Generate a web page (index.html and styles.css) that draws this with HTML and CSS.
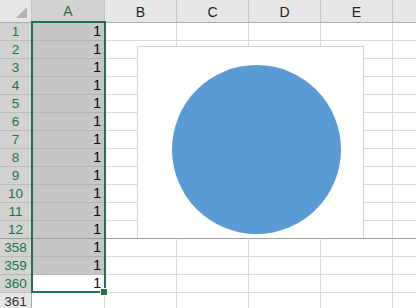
FILE: index.html
```html
<!DOCTYPE html>
<html>
<head>
<meta charset="utf-8">
<link rel="stylesheet" href="styles.css">
</head>
<body>
<div class="sheet">
  <div class="grid">
    <div class="hd corner"><span class="tri"></span></div>
    <div class="hd col sel">A</div>
    <div class="hd col">B</div>
    <div class="hd col">C</div>
    <div class="hd col">D</div>
    <div class="hd col">E</div>
    <div class="hd col last"></div>

    <div class="rh sel">1</div><div class="c a">1</div><div class="c"></div><div class="c"></div><div class="c"></div><div class="c"></div><div class="c last"></div>
    <div class="rh sel">2</div><div class="c a">1</div><div class="c"></div><div class="c"></div><div class="c"></div><div class="c"></div><div class="c last"></div>
    <div class="rh sel">3</div><div class="c a">1</div><div class="c"></div><div class="c"></div><div class="c"></div><div class="c"></div><div class="c last"></div>
    <div class="rh sel">4</div><div class="c a">1</div><div class="c"></div><div class="c"></div><div class="c"></div><div class="c"></div><div class="c last"></div>
    <div class="rh sel">5</div><div class="c a">1</div><div class="c"></div><div class="c"></div><div class="c"></div><div class="c"></div><div class="c last"></div>
    <div class="rh sel">6</div><div class="c a">1</div><div class="c"></div><div class="c"></div><div class="c"></div><div class="c"></div><div class="c last"></div>
    <div class="rh sel">7</div><div class="c a">1</div><div class="c"></div><div class="c"></div><div class="c"></div><div class="c"></div><div class="c last"></div>
    <div class="rh sel">8</div><div class="c a">1</div><div class="c"></div><div class="c"></div><div class="c"></div><div class="c"></div><div class="c last"></div>
    <div class="rh sel">9</div><div class="c a">1</div><div class="c"></div><div class="c"></div><div class="c"></div><div class="c"></div><div class="c last"></div>
    <div class="rh sel">10</div><div class="c a">1</div><div class="c"></div><div class="c"></div><div class="c"></div><div class="c"></div><div class="c last"></div>
    <div class="rh sel">11</div><div class="c a">1</div><div class="c"></div><div class="c"></div><div class="c"></div><div class="c"></div><div class="c last"></div>
    <div class="rh sel frz">12</div><div class="c a frz">1</div><div class="c frz"></div><div class="c frz"></div><div class="c frz"></div><div class="c frz"></div><div class="c last frz"></div>
    <div class="rh sel">358</div><div class="c a">1</div><div class="c"></div><div class="c"></div><div class="c"></div><div class="c"></div><div class="c last"></div>
    <div class="rh sel">359</div><div class="c a">1</div><div class="c"></div><div class="c"></div><div class="c"></div><div class="c"></div><div class="c last"></div>
    <div class="rh sel">360</div><div class="c active">1</div><div class="c"></div><div class="c"></div><div class="c"></div><div class="c"></div><div class="c last"></div>
    <div class="rh">361</div><div class="c"></div><div class="c"></div><div class="c"></div><div class="c"></div><div class="c"></div><div class="c last"></div>
  </div>

  <div class="selection"></div>
  <div class="handle"></div>

  <div class="chart">
    <div class="pie"></div>
  </div>
</div>
</body>
</html>
```

FILE: styles.css
```css
html, body {
  margin: 0;
  padding: 0;
  background: #ffffff;
  overflow: hidden;
}

.sheet {
  position: relative;
  width: 416px;
  height: 308px;
  overflow: hidden;
  font-family: "Liberation Sans", Arial, sans-serif;
  font-size: 13px;
}

.grid {
  display: grid;
  grid-template-columns: 32px 73px 72px 72px 72px 72px 1fr;
  grid-template-rows: 23px repeat(16, 18px);
}

.hd {
  box-sizing: border-box;
  background: #e6e6e6;
  border-bottom: 1px solid #ababab;
  border-right: 1px solid #c6c6c6;
  color: #222;
  font-size: 14px;
  display: flex;
  align-items: flex-end;
  justify-content: center;
  padding-bottom: 2px;
}

.hd.last { border-right: none; }

.hd.sel {
  background: #d2d2d2;
  color: #217346;
  border-bottom: 2px solid #217346;
}

.corner {
  position: relative;
  border-right: 1px solid #c6c6c6;
}

.tri {
  position: absolute;
  right: 4px;
  bottom: 4px;
  width: 0;
  height: 0;
  border-left: 11px solid transparent;
  border-bottom: 11px solid #b4b4b4;
}

.rh {
  box-sizing: border-box;
  background: #e6e6e6;
  border-bottom: 1px solid #c8c8c8;
  border-right: 1px solid #ababab;
  color: #333;
  font-size: 13.5px;
  display: flex;
  align-items: flex-end;
  justify-content: center;
  padding-bottom: 1px;
  line-height: 15px;
}

.rh.sel {
  background: #d2d2d2;
  color: #217346;
  border-bottom-color: #bcbcbc;
}

.c {
  box-sizing: border-box;
  border-right: 1px solid #d9d9d9;
  border-bottom: 1px solid #d9d9d9;
  color: #000;
  font-size: 14px;
  display: flex;
  align-items: flex-end;
  justify-content: flex-end;
  padding-right: 3px;
  padding-bottom: 1px;
  line-height: 15px;
}

.c.last { border-right: none; }

.c.a {
  background: #c6c6c6;
  border-bottom-color: #b5b5b5;
}

.c.active {
  background: #ffffff;
}

.frz,
.rh.frz,
.c.a.frz {
  border-bottom: 1px solid #9f9f9f;
}

.selection {
  position: absolute;
  left: 31px;
  top: 21px;
  width: 75px;
  height: 272px;
  box-sizing: border-box;
  border: 2px solid #217346;
  pointer-events: none;
}

.handle {
  position: absolute;
  left: 101px;
  top: 289px;
  width: 6px;
  height: 6px;
  background: #217346;
  outline: 1px solid #ffffff;
}

.chart {
  position: absolute;
  left: 137px;
  top: 46px;
  width: 227px;
  height: 192px;
  box-sizing: border-box;
  background: #ffffff;
  border: 1px solid #d4d4d4;
  border-bottom: none;
}

.pie {
  position: absolute;
  left: 34px;
  top: 18px;
  width: 169px;
  height: 169px;
  border-radius: 50%;
  background: #5b9bd5;
}
```
